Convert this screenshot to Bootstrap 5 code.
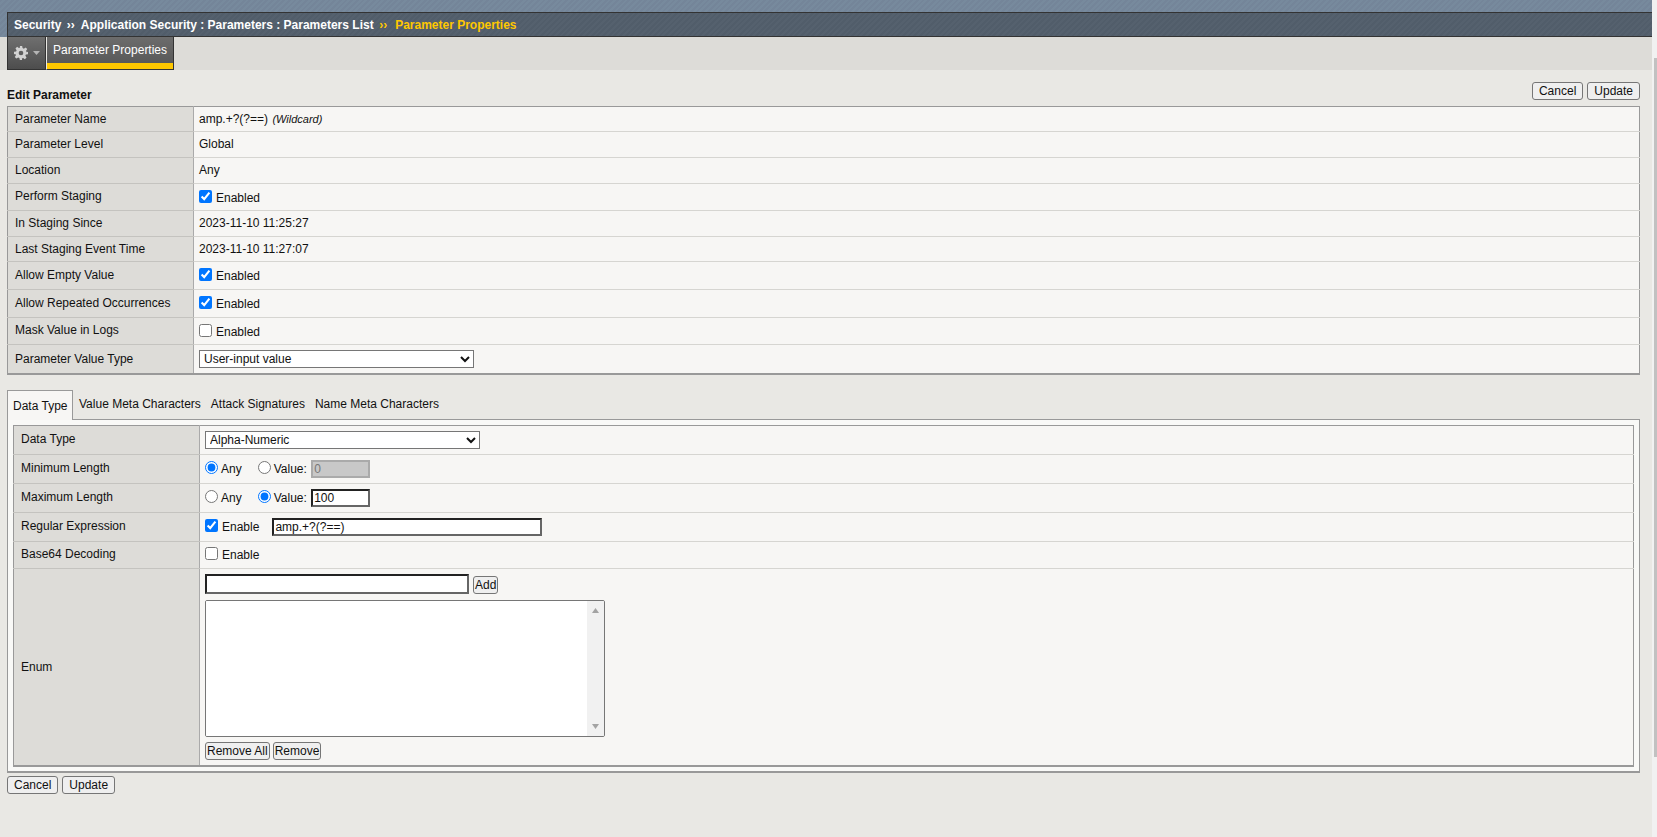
<!DOCTYPE html>
<html lang="en">
<head>
<meta charset="utf-8">
<title>Parameter Properties</title>
<link href="https://cdn.jsdelivr.net/npm/bootstrap@5.3.0/dist/css/bootstrap.min.css" rel="stylesheet">
<style>
html,body{height:100%;overflow:hidden}
body{background:#e9e8e4;font:12px/14px "Liberation Sans",Arial,sans-serif;color:#111}
.page-main{width:1652px;height:837px;overflow:hidden}
.page-strip{width:5px;height:837px;background:#f1f1f1}
.page-thumb{width:3px;height:699px;margin:58px 0 0 2px;background:#c1c1c1}
.top-band{height:37px;padding:12px 0 0 7px;background:repeating-linear-gradient(135deg,#748599 0,#748599 2px,#778a9d 2px,#778a9d 4px)}
.crumbs{height:25px;padding-left:6px;border:1px solid #333;border-right:0;color:#fff;font-weight:700;background:repeating-linear-gradient(135deg,#515d6a 0,#515d6a 2px,#55616e 2px,#55616e 4px);line-height:24px;white-space:nowrap}
.crumb-sep{font-size:12px;margin:0 6px 0 5.500px;font-weight:700}
.crumb-now,.crumb-now .crumb-sep{color:#ffc800}
.crumb-now .crumb-sep{margin-right:8px}
.tab-strip{height:33px;background:#dddcd8;padding-left:7px}
.gear-box{width:39px;height:33px;border:1px solid #333;border-top:0;background:linear-gradient(#6f6f6f,#4d4d4d);gap:5px}
.page-tab{width:128px;height:33px;border:1px solid #333;border-top:0;border-left:1px solid #e9e8e4;background:linear-gradient(#6c6c6c,#555);color:#fff;padding:6px 0 0 6px;position:relative}
.page-tab::after{content:"";position:absolute;left:0;right:0;bottom:0;height:6px;background:#ffc800}
.page-body{padding:12px 12px 0 7px}
.title-row{height:24px}
.title-text{font-weight:700;font-size:12px;line-height:14px;margin-top:6px;color:#111}
.ctl-btn{font:12px/14px "Liberation Sans",Arial,sans-serif;color:#111;background:#efefef;border:1px solid #767676;border-radius:3px;height:18px;padding:0 6px}
.ctl-tight{padding:0 1px}
.pair-gap{gap:3px}
.tall-table{table-layout:fixed;margin:0;width:100%;border:1px solid #999;border-bottom-width:2px;--bs-table-bg:transparent;--bs-table-color:#111}
.tall-table>tbody>tr>td{padding:0 5px;border:0;border-bottom:1px solid #d6d5d1;background:#f7f6f4;vertical-align:middle;white-space:nowrap;line-height:14px}
.tall-table>tbody>tr>td:first-child{padding-left:7px;background:#dddcd8;border-right:1px solid #aaa;border-bottom-color:#c4c3bf}
.tall-table>tbody>tr:last-child>td{border-bottom:0}
.tall-table>tbody>tr.r26>td{padding-bottom:2px}
.tall-table>tbody>tr.lift>td:first-child{padding-bottom:2px}
.col-a{width:186px}
.col-b{width:186px}
.r25{height:25px}.r26{height:26px}.r27{height:27px}.r28{height:28px}.r29{height:29px}.r30{height:29px}.r198{height:198px}
.tall-table input[type=checkbox],.tall-table input[type=radio]{margin:0 4px 0 0;vertical-align:-1px;width:13px;height:13px}
.tall-table input[type=radio]{margin-right:3px}
.wild{font-size:11px;font-style:italic;margin-left:1px}
.sel-a{width:275px;height:18px;font:12px "Liberation Sans",Arial,sans-serif;background:#fff;border:1px solid #767676;padding:0;color:#111}
.tab-row{margin-top:15px;height:30px;padding-left:0;border:0;position:relative;z-index:1;flex-wrap:nowrap}
.tab-row .nav-link{font-size:12px;line-height:14px;color:#111;background:transparent;border:0;border-radius:0;margin:0;padding:7px 4px 0 6px;height:30px;white-space:nowrap}
.tab-row .nav-link.active{background:#f7f6f4;border:1px solid #999;border-bottom:0;color:#111;padding:8px 0 0 5px;width:66px}
.tab-pane-box{border:1px solid #999;border-bottom-width:2px;height:354px;margin-top:-1px;padding:5px;background:#f9f9f7}
.num-field{width:59px;margin-left:1px;height:18px;padding:0 1px;font:12px/14px "Liberation Sans",Arial,sans-serif;color:#111;background:#fff;border:2px solid;border-color:#222 #666 #666 #222;border-radius:0;outline:0}
.num-off{background:#c8c8c8;color:#777;border-color:#aaa}
.rx-field{width:270px;margin-left:13px}
.enum-field{width:264px;height:20px;margin-left:0}
.enum-wrap{width:400px;height:137px;margin:6px 0 5px;background:#fff;border:1px solid #767676;border-radius:2px;overflow:hidden}
.enum-area{flex:1 1 auto;min-width:0;background:#fff;border:0;resize:none;overflow:hidden;padding:2px;outline:0}
.enum-bar{width:17px;background:#f1f1f1;padding:7px 0}
.radio-gap{margin-left:16px}
.foot-row{margin-top:3px;gap:4px}
</style>
</head>
<body>
<div class="d-flex">
<div class="page-main">
  <div class="top-band">
    <div class="crumbs">Security<span class="crumb-sep">››</span>Application Security : Parameters : Parameters List<span class="crumb-now"><span class="crumb-sep">››</span>Parameter Properties</span></div>
  </div>
  <div class="tab-strip d-flex">
    <div class="gear-box d-flex align-items-center justify-content-center">
      <svg width="14" height="14" viewBox="0 0 24 24" aria-hidden="true"><path fill="#d2d2d2" fill-rule="evenodd" d="M10 0h4l.7 3.600 2.200.9 3-2 2.800 2.800-2 3 .9 2.200L24 10v4l-3.600.7-.9 2.200 2 3-2.800 2.800-3-2-2.200.9L14 24h-4l-.7-3.600-2.200-.9-3 2-2.800-2.800 2-3-.9-2.200L0 14v-4l3.600-.7.9-2.200-2-3 2.800-2.800 3 2 2.200-.9zM12 8a4 4 0 1 0 0 8 4 4 0 0 0 0-8z"/></svg>
      <svg width="7" height="4" viewBox="0 0 7 4" aria-hidden="true"><path fill="#b4b4b4" d="M0 0h7L3.500 4z"/></svg>
    </div>
    <div class="page-tab">Parameter Properties</div>
  </div>
  <div class="page-body">
    <div class="title-row d-flex justify-content-between">
      <div class="title-text">Edit Parameter</div>
      <div class="d-flex gap-1"><button class="ctl-btn" type="button">Cancel</button><button class="ctl-btn" type="button">Update</button></div>
    </div>
    <table class="table tall-table">
      <colgroup><col class="col-a"><col></colgroup>
      <tbody>
        <tr class="r25"><td>Parameter Name</td><td>amp.+?(?==) <span class="wild">(Wildcard)</span></td></tr>
        <tr class="r26"><td>Parameter Level</td><td>Global</td></tr>
        <tr class="r26"><td>Location</td><td>Any</td></tr>
        <tr class="r27 lift"><td>Perform Staging</td><td><label><input type="checkbox" checked>Enabled</label></td></tr>
        <tr class="r26"><td>In Staging Since</td><td>2023-11-10 11:25:27</td></tr>
        <tr class="r25"><td>Last Staging Event Time</td><td>2023-11-10 11:27:07</td></tr>
        <tr class="r28 lift"><td>Allow Empty Value</td><td><label><input type="checkbox" checked>Enabled</label></td></tr>
        <tr class="r28 lift"><td>Allow Repeated Occurrences</td><td><label><input type="checkbox" checked>Enabled</label></td></tr>
        <tr class="r27 lift"><td>Mask Value in Logs</td><td><label><input type="checkbox">Enabled</label></td></tr>
        <tr class="r30"><td>Parameter Value Type</td><td><select class="sel-a"><option>User-input value</option></select></td></tr>
      </tbody>
    </table>
    <ul class="nav nav-tabs tab-row">
      <li class="nav-item"><a class="nav-link active" href="#">Data Type</a></li>
      <li class="nav-item"><a class="nav-link" href="#">Value Meta Characters</a></li>
      <li class="nav-item"><a class="nav-link" href="#">Attack Signatures</a></li>
      <li class="nav-item"><a class="nav-link" href="#">Name Meta Characters</a></li>
    </ul>
    <div class="tab-pane-box">
      <table class="table tall-table">
        <colgroup><col class="col-b"><col></colgroup>
        <tbody>
          <tr class="r29 lift"><td>Data Type</td><td><select class="sel-a"><option>Alpha-Numeric</option></select></td></tr>
          <tr class="r29 lift"><td>Minimum Length</td><td><label><input type="radio" name="mn" checked>Any</label><label class="radio-gap"><input type="radio" name="mn">Value:</label> <input class="num-field num-off" type="text" value="0" disabled></td></tr>
          <tr class="r29 lift"><td>Maximum Length</td><td><label><input type="radio" name="mx">Any</label><label class="radio-gap"><input type="radio" name="mx" checked>Value:</label> <input class="num-field" type="text" value="100"></td></tr>
          <tr class="r29 lift"><td>Regular Expression</td><td><label><input type="checkbox" checked>Enable</label><input class="num-field rx-field" type="text" value="amp.+?(?==)"></td></tr>
          <tr class="r27 lift"><td>Base64 Decoding</td><td><label><input type="checkbox">Enable</label></td></tr>
          <tr class="r198"><td>Enum</td><td>
            <div class="d-flex align-items-end gap-1"><input class="num-field enum-field" type="text"><button class="ctl-btn ctl-tight" type="button">Add</button></div>
            <div class="enum-wrap d-flex">
              <textarea class="enum-area"></textarea>
              <div class="enum-bar d-flex flex-column justify-content-between align-items-center">
                <svg width="7" height="5" viewBox="0 0 7 5" aria-hidden="true"><path fill="#a3a3a3" d="M3.500 0L7 5H0z"/></svg>
                <svg width="7" height="5" viewBox="0 0 7 5" aria-hidden="true"><path fill="#a3a3a3" d="M0 0H7L3.500 5z"/></svg>
              </div>
            </div>
            <div class="d-flex pair-gap"><button class="ctl-btn ctl-tight" type="button">Remove All</button><button class="ctl-btn ctl-tight" type="button">Remove</button></div>
          </td></tr>
        </tbody>
      </table>
    </div>
    <div class="foot-row d-flex"><button class="ctl-btn" type="button">Cancel</button><button class="ctl-btn" type="button">Update</button></div>
  </div>
</div>
<div class="page-strip"><div class="page-thumb"></div></div>
</div>
<script src="https://cdn.jsdelivr.net/npm/bootstrap@5.3.0/dist/js/bootstrap.bundle.min.js"></script>
</body>
</html>
